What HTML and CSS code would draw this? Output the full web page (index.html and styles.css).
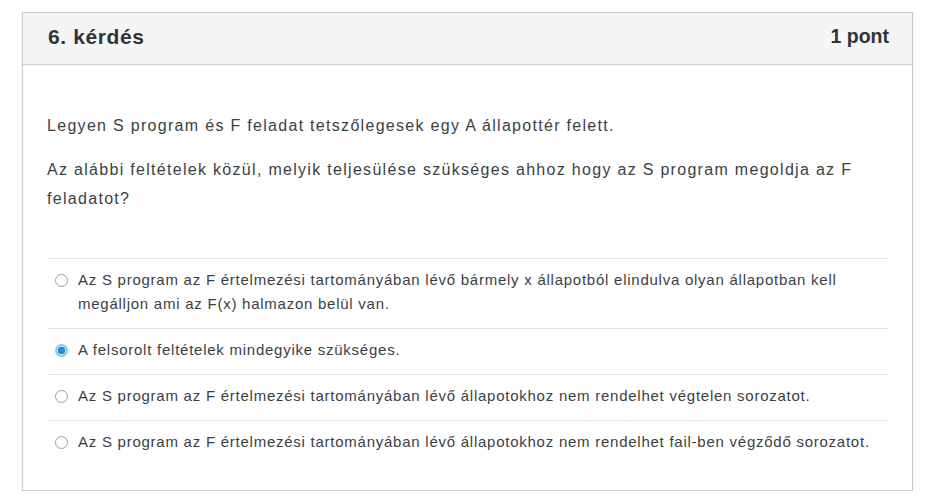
FILE: index.html
```html
<!DOCTYPE html>
<html lang="hu">
<head>
<meta charset="utf-8">
<link rel="stylesheet" href="styles.css">
</head>
<body>
<div class="card">
  <div class="card-head">
    <span class="qnum">6. kérdés</span>
    <span class="points">1 pont</span>
  </div>
  <div class="card-body">
    <p class="q">Legyen S program és F feladat tetszőlegesek egy A állapottér felett.</p>
    <p class="q">Az alábbi feltételek közül, melyik teljesülése szükséges ahhoz hogy az S program megoldja az F feladatot?</p>
    <div class="answers">
      <div class="answer"><span class="radio"></span><span class="atext">Az S program az F értelmezési tartományában lévő bármely x állapotból elindulva olyan állapotban kell megálljon ami az F(x) halmazon belül van.</span></div>
      <div class="answer"><span class="radio checked"></span><span class="atext">A felsorolt feltételek mindegyike szükséges.</span></div>
      <div class="answer"><span class="radio"></span><span class="atext">Az S program az F értelmezési tartományában lévő állapotokhoz nem rendelhet végtelen sorozatot.</span></div>
      <div class="answer"><span class="radio"></span><span class="atext">Az S program az F értelmezési tartományában lévő állapotokhoz nem rendelhet fail-ben végződő sorozatot.</span></div>
    </div>
  </div>
</div>
</body>
</html>
```
FILE: styles.css
```css
html, body { margin: 0; padding: 0; background: #fff; }
body {
  font-family: "Liberation Sans", Arial, sans-serif;
  color: #3a3f44;
  padding: 12px 22px 0 22px;
}
.card {
  border: 1px solid #c9cccf;
  width: 891px;
  box-sizing: border-box;
  box-shadow: 0 1px 2px rgba(0,0,0,0.08);
}
.card-head {
  display: flex;
  justify-content: space-between;
  align-items: center;
  height: 52px;
  padding: 0 23px 4px 25px;
  box-sizing: border-box;
  background: #f5f5f5;
  border-bottom: 1px solid #c9cccf;
  font-weight: bold;
  color: #2f3438;
}
.qnum { font-size: 21px; letter-spacing: 0.6px; }
.points { font-size: 19.5px; }
.card-body { padding: 46px 23px 24px 24px; }
.q {
  margin: 0 0 15px;
  font-size: 16px;
  letter-spacing: 1.3px;
  line-height: 29px;
}
.answers { margin-top: 45px; }
.answer {
  display: flex;
  align-items: flex-start;
  border-top: 1px solid #e3e5e7;
  padding: 9px 8px 12px;
  font-size: 15px;
  letter-spacing: 0.75px;
  line-height: 24px;
}
.radio {
  flex: none;
  width: 13px;
  height: 13px;
  border: 1px solid #9aa0a5;
  border-radius: 50%;
  margin: 6px 10px 0 0;
  box-sizing: border-box;
  background: #fff;
}
.radio.checked {
  border: 2px solid #8cc4ea;
  background: radial-gradient(circle, #1e8fe0 0 3.5px, #d8ecfa 4px);
}
.atext { color: #3a3f44; }
```
